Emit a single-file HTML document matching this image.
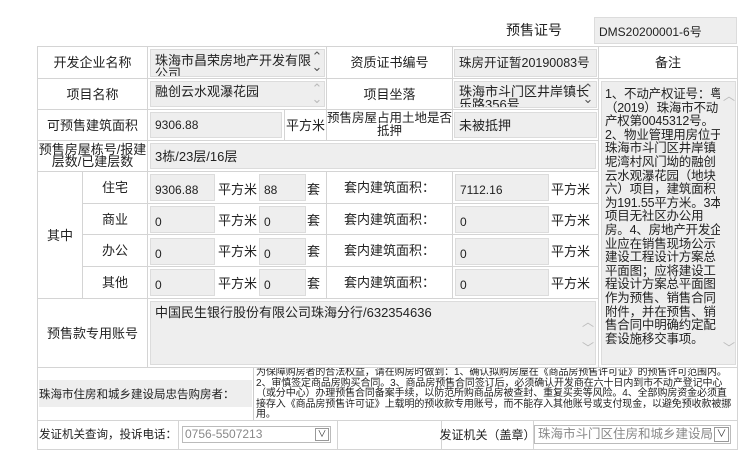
<!DOCTYPE html><html><head><meta charset="utf-8"><style>
body{margin:0;width:750px;height:450px;background:#fff;font-family:"Liberation Sans","Noto Sans CJK SC",sans-serif;color:#222;position:relative;overflow:hidden}
.c{position:absolute;border:1px solid #d4d4d4;box-sizing:border-box;font-size:13px;display:flex;align-items:center;justify-content:center;text-align:center;line-height:13px;white-space:nowrap}
.i{position:absolute;background:#eeeeee;border:1px solid #dcdcdc;box-sizing:border-box;font-size:12px;display:flex;align-items:center;padding-left:4px;line-height:13px;color:#222}
.sb{position:absolute;color:#555;font-size:10px;line-height:8px;text-align:center;width:12px}
</style></head><body>
<div style="position:absolute;left:506px;top:20px;font-size:14px">预售证号</div>
<div class="i" style="left:594px;top:17px;width:143px;height:27px;padding-top:4px">DMS20200001-6号</div>

<div class="c" style="left:37px;top:46px;width:111px;height:33px">开发企业名称</div>
<div class="c" style="left:147px;top:46px;width:180px;height:33px"></div>
<div class="i" style="left:150px;top:49px;width:175px;height:28px;align-items:flex-start;padding-top:4px;overflow:hidden;font-size:13px">珠海市昌荣房地产开发有限<br>公司</div>
<div class="sb" style="left:311px;top:52px;font-size:13px;line-height:10px">⌃<br>⌄</div>
<div class="c" style="left:326px;top:46px;width:127px;height:33px">资质证书编号</div>
<div class="c" style="left:452px;top:46px;width:147px;height:33px"></div>
<div class="i" style="left:454px;top:49px;width:143px;height:28px;font-size:12.5px;white-space:nowrap">珠房开证暂20190083号</div>
<div class="c" style="left:598px;top:46px;width:140px;height:33px">备注</div>

<div class="c" style="left:37px;top:78px;width:111px;height:32px">项目名称</div>
<div class="c" style="left:147px;top:78px;width:180px;height:32px"></div>
<div class="i" style="left:150px;top:81px;width:175px;height:26px;align-items:flex-start;padding-top:3px;font-size:13px">融创云水观瀑花园</div>
<div class="sb" style="left:311px;top:84px;color:#bbb;font-size:13px;line-height:10px">⌃<br>⌄</div>
<div class="c" style="left:326px;top:78px;width:127px;height:32px">项目坐落</div>
<div class="c" style="left:452px;top:78px;width:147px;height:32px"></div>
<div class="i" style="left:454px;top:81px;width:143px;height:27px;align-items:flex-start;padding-top:3px;overflow:hidden;font-size:13px">珠海市斗门区井岸镇长<br>乐路356号</div>
<div class="sb" style="left:582px;top:84px;font-size:13px;line-height:10px">⌃<br>⌄</div>

<div class="c" style="left:37px;top:109px;width:111px;height:32px">可预售建筑面积</div>
<div class="c" style="left:147px;top:109px;width:138px;height:32px"></div>
<div class="i" style="left:150px;top:112px;width:132px;height:26px">9306.88</div>
<div class="c" style="left:284px;top:109px;width:43px;height:32px">平方米</div>
<div class="c" style="left:326px;top:109px;width:127px;height:32px;font-size:12.5px">预售房屋占用土地是否<br>抵押</div>
<div class="c" style="left:452px;top:109px;width:147px;height:32px"></div>
<div class="i" style="left:454px;top:112px;width:143px;height:26px;font-size:13px">未被抵押</div>

<div class="c" style="left:37px;top:140px;width:111px;height:32px;line-height:12px">预售房屋栋号/报建<br>层数/已建层数</div>
<div class="c" style="left:147px;top:140px;width:452px;height:32px"></div>
<div class="i" style="left:150px;top:143px;width:446px;height:26px;font-size:13px">3栋/23层/16层</div>

<div class="c" style="left:37px;top:171px;width:46px;height:128px">其中</div>
<div class="c" style="left:82px;top:171px;width:66px;height:33px">住宅</div>
<div class="c" style="left:82px;top:203px;width:66px;height:32px">商业</div>
<div class="c" style="left:82px;top:234px;width:66px;height:33px">办公</div>
<div class="c" style="left:82px;top:266px;width:66px;height:33px">其他</div>

<div class="c" style="left:147px;top:171px;width:180px;height:33px"></div>
<div class="c" style="left:147px;top:203px;width:180px;height:32px"></div>
<div class="c" style="left:147px;top:234px;width:180px;height:33px"></div>
<div class="c" style="left:147px;top:266px;width:180px;height:33px"></div>
<div class="c" style="left:326px;top:171px;width:127px;height:33px">套内建筑面积：</div>
<div class="c" style="left:326px;top:203px;width:127px;height:32px">套内建筑面积：</div>
<div class="c" style="left:326px;top:234px;width:127px;height:33px">套内建筑面积：</div>
<div class="c" style="left:326px;top:266px;width:127px;height:33px">套内建筑面积：</div>
<div class="c" style="left:452px;top:171px;width:147px;height:33px"></div>
<div class="c" style="left:452px;top:203px;width:147px;height:32px"></div>
<div class="c" style="left:452px;top:234px;width:147px;height:33px"></div>
<div class="c" style="left:452px;top:266px;width:147px;height:33px"></div>

<div class="i" style="left:150px;top:174px;width:65px;height:27px;padding-top:5px">9306.88</div>
<div class="i" style="left:150px;top:206px;width:65px;height:27px;padding-top:5px">0</div>
<div class="i" style="left:150px;top:238px;width:65px;height:27px;padding-top:5px">0</div>
<div class="i" style="left:150px;top:269px;width:65px;height:27px;padding-top:5px">0</div>
<div style="position:absolute;left:218px;top:179px;font-size:13px">平方米</div>
<div style="position:absolute;left:218px;top:210px;font-size:13px">平方米</div>
<div style="position:absolute;left:218px;top:241px;font-size:13px">平方米</div>
<div style="position:absolute;left:218px;top:273px;font-size:13px">平方米</div>
<div class="i" style="left:259px;top:174px;width:47px;height:27px;padding-top:5px">88</div>
<div class="i" style="left:259px;top:206px;width:47px;height:27px;padding-top:5px">0</div>
<div class="i" style="left:259px;top:238px;width:47px;height:27px;padding-top:5px">0</div>
<div class="i" style="left:259px;top:269px;width:47px;height:27px;padding-top:5px">0</div>
<div style="position:absolute;left:307px;top:179px;font-size:13px">套</div>
<div style="position:absolute;left:307px;top:210px;font-size:13px">套</div>
<div style="position:absolute;left:307px;top:241px;font-size:13px">套</div>
<div style="position:absolute;left:307px;top:273px;font-size:13px">套</div>
<div class="i" style="left:455px;top:174px;width:94px;height:27px;padding-top:5px">7112.16</div>
<div class="i" style="left:455px;top:206px;width:94px;height:27px;padding-top:5px">0</div>
<div class="i" style="left:455px;top:238px;width:94px;height:27px;padding-top:5px">0</div>
<div class="i" style="left:455px;top:269px;width:94px;height:27px;padding-top:5px">0</div>
<div style="position:absolute;left:551px;top:179px;font-size:13px">平方米</div>
<div style="position:absolute;left:551px;top:210px;font-size:13px">平方米</div>
<div style="position:absolute;left:551px;top:241px;font-size:13px">平方米</div>
<div style="position:absolute;left:551px;top:273px;font-size:13px">平方米</div>

<div class="c" style="left:598px;top:78px;width:140px;height:290px"></div>
<div class="i" style="left:601px;top:81px;width:135px;height:284px;padding:6px 0 0 3px;font-size:12.5px;letter-spacing:-0.2px;line-height:13.6px;display:block;white-space:nowrap;overflow:hidden">1、不动产权证号：粤<br>（2019）珠海市不动<br>产权第0045312号。<br>2、物业管理用房位于<br>珠海市斗门区井岸镇<br>坭湾村风门坳的融创<br>云水观瀑花园（地块<br>六）项目，建筑面积<br>为191.55平方米。3本<br>项目无社区办公用<br>房。4、房地产开发企<br>业应在销售现场公示<br>建设工程设计方案总<br>平面图；应将建设工<br>程设计方案总平面图<br>作为预售、销售合同<br>附件，并在预售、销<br>售合同中明确约定配<br>套设施移交事项。</div>
<div style="position:absolute;left:720px;top:82px;width:15px;height:282px;background:#eeeeee"></div>
<div class="sb" style="left:723px;top:92px;color:#bbb;font-size:12px">︿</div>
<div class="sb" style="left:723px;top:344px;color:#bbb;font-size:12px">﹀</div>

<div class="c" style="left:37px;top:298px;width:111px;height:70px">预售款专用账号</div>
<div class="c" style="left:147px;top:298px;width:452px;height:70px"></div>
<div class="i" style="left:150px;top:301px;width:446px;height:64px;align-items:flex-start;padding-top:4px;font-size:13px">中国民生银行股份有限公司珠海分行/632354636</div>
<div class="sb" style="left:582px;top:318px;color:#bbb;font-size:12px">︿</div>
<div class="sb" style="left:582px;top:344px;color:#bbb;font-size:12px">﹀</div>

<div class="c" style="left:37px;top:367px;width:701px;height:54px"></div>
<div style="position:absolute;left:39px;top:380px;width:213px;height:27px;background:#eeeeee;font-size:11.5px;display:flex;align-items:center;white-space:nowrap">珠海市住房和城乡建设局忠告购房者：</div>
<div style="position:absolute;left:253px;top:368px;width:484px;height:52px;border-left:1px solid #ccc;font-size:10px;line-height:10.5px;letter-spacing:-0.1px;padding-left:2px;overflow:hidden;white-space:nowrap">为保障购房者的合法权益，请在购房时做到：1、确认拟购房屋在《商品房预售许可证》的预售许可范围内。<br>2、审慎签定商品房购买合同。3、商品房预售合同签订后，必须确认开发商在六十日内到市不动产登记中心<br>（或分中心）办理预售合同备案手续，以防范所购商品房被查封、重复买卖等风险。4、全部购房资金必须直<br>接存入《商品房预售许可证》上载明的预收款专用账号，而不能存入其他账号或支付现金，以避免预收款被挪<br>用。</div>

<div class="c" style="left:37px;top:420px;width:142px;height:30px;font-size:11.5px">发证机关查询，投诉电话：</div>
<div class="c" style="left:178px;top:420px;width:160px;height:30px"></div>
<div style="position:absolute;left:182px;top:426px;width:149px;height:17px;border:1px solid #bbb;box-sizing:border-box;font-size:12px;color:#888;padding-left:2px;line-height:15px">0756-5507213</div>
<div style="position:absolute;left:315px;top:428px;width:14px;height:13px;border:1px solid #999;box-sizing:border-box;font-size:9px;text-align:center;line-height:11px;color:#333">∨</div>
<div class="c" style="left:337px;top:420px;width:105px;height:30px"></div>
<div class="c" style="left:441px;top:420px;width:93px;height:30px;font-size:12px">发证机关（盖章）</div>
<div class="c" style="left:533px;top:420px;width:205px;height:30px"></div>
<div style="position:absolute;left:534px;top:425px;width:197px;height:19px;border:1px solid #bbb;box-sizing:border-box;font-size:12.5px;color:#888;padding-left:3px;line-height:17px;white-space:nowrap;overflow:hidden">珠海市斗门区住房和城乡建设局</div>
<div style="position:absolute;left:714px;top:427px;width:15px;height:15px;border:1px solid #999;box-sizing:border-box;font-size:10px;text-align:center;line-height:13px;color:#333;background:#fff">∨</div>
</body></html>
